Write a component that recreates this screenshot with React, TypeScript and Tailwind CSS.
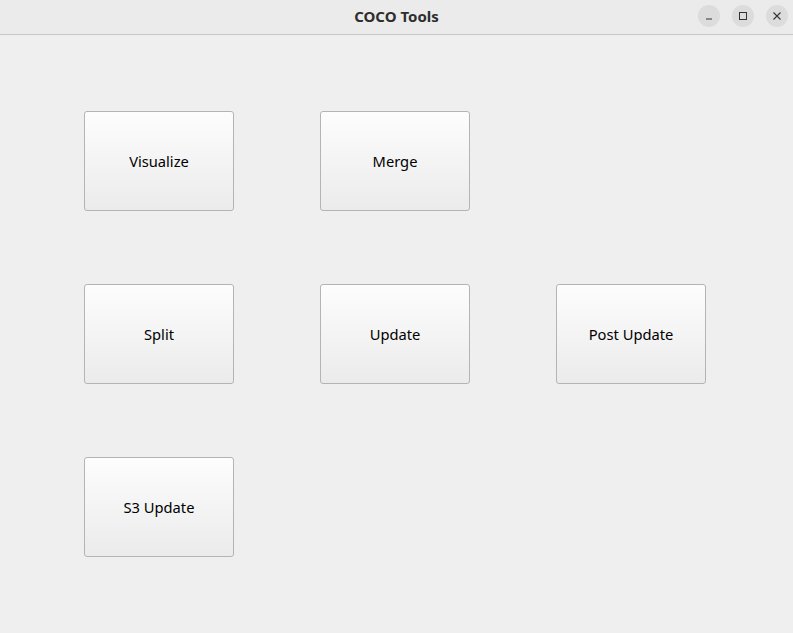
import React from "react";

const buttons: { label: string; col: number; row: number }[] = [
  { label: "Visualize", col: 1, row: 1 },
  { label: "Merge", col: 2, row: 1 },
  { label: "Split", col: 1, row: 2 },
  { label: "Update", col: 2, row: 2 },
  { label: "Post Update", col: 3, row: 2 },
  { label: "S3 Update", col: 1, row: 3 },
];

const colClass: Record<number, string> = { 1: "col-start-1", 2: "col-start-2", 3: "col-start-3" };
const rowClass: Record<number, string> = { 1: "row-start-1", 2: "row-start-2", 3: "row-start-3" };

export default function App() {
  return (
    <div
      className="w-[793px] h-[633px] bg-[#efefef] flex flex-col overflow-hidden"
      style={{ fontFamily: '"Noto Sans", "Open Sans", sans-serif' }}
    >
      <div className="relative h-[35px] shrink-0 bg-[#ebebeb] border-b border-[#c6c6c6] flex items-center justify-center pb-[2px]">
        <span className="text-[15px] font-bold text-[#2e2e2e] leading-none">COCO Tools</span>
        <div className="absolute right-[5px] top-[5px] flex gap-[12px]">
          <div className="w-[22px] h-[22px] rounded-full bg-[#dcdcdc] flex items-center justify-center">
            <svg width="10" height="10" viewBox="0 0 10 10">
              <line x1="2" y1="8" x2="8" y2="8" stroke="#333" strokeWidth="1" />
            </svg>
          </div>
          <div className="w-[22px] h-[22px] rounded-full bg-[#dcdcdc] flex items-center justify-center">
            <svg width="10" height="10" viewBox="0 0 10 10">
              <rect x="1.5" y="1.5" width="7" height="7" fill="none" stroke="#333" strokeWidth="1" />
            </svg>
          </div>
          <div className="w-[22px] h-[22px] rounded-full bg-[#dcdcdc] flex items-center justify-center">
            <svg width="10" height="10" viewBox="0 0 10 10">
              <path d="M1.5 1.5 L8.5 8.5 M8.5 1.5 L1.5 8.5" stroke="#333" strokeWidth="1.1" />
            </svg>
          </div>
        </div>
      </div>
      <div className="pl-[84px] pt-[76px] grid grid-cols-[150px_150px_150px] grid-rows-[100px_100px_100px] gap-x-[86px] gap-y-[73px]">
        {buttons.map((b) => (
          <div
            key={b.label}
            className={`${colClass[b.col]} ${rowClass[b.row]} w-[150px] h-[100px] rounded-[3px] border border-[#b4b4b4] bg-gradient-to-b from-[#fdfdfd] to-[#ebebeb] flex items-center justify-center text-[14.7px] text-black`}
          >
            {b.label}
          </div>
        ))}
      </div>
    </div>
  );
}
